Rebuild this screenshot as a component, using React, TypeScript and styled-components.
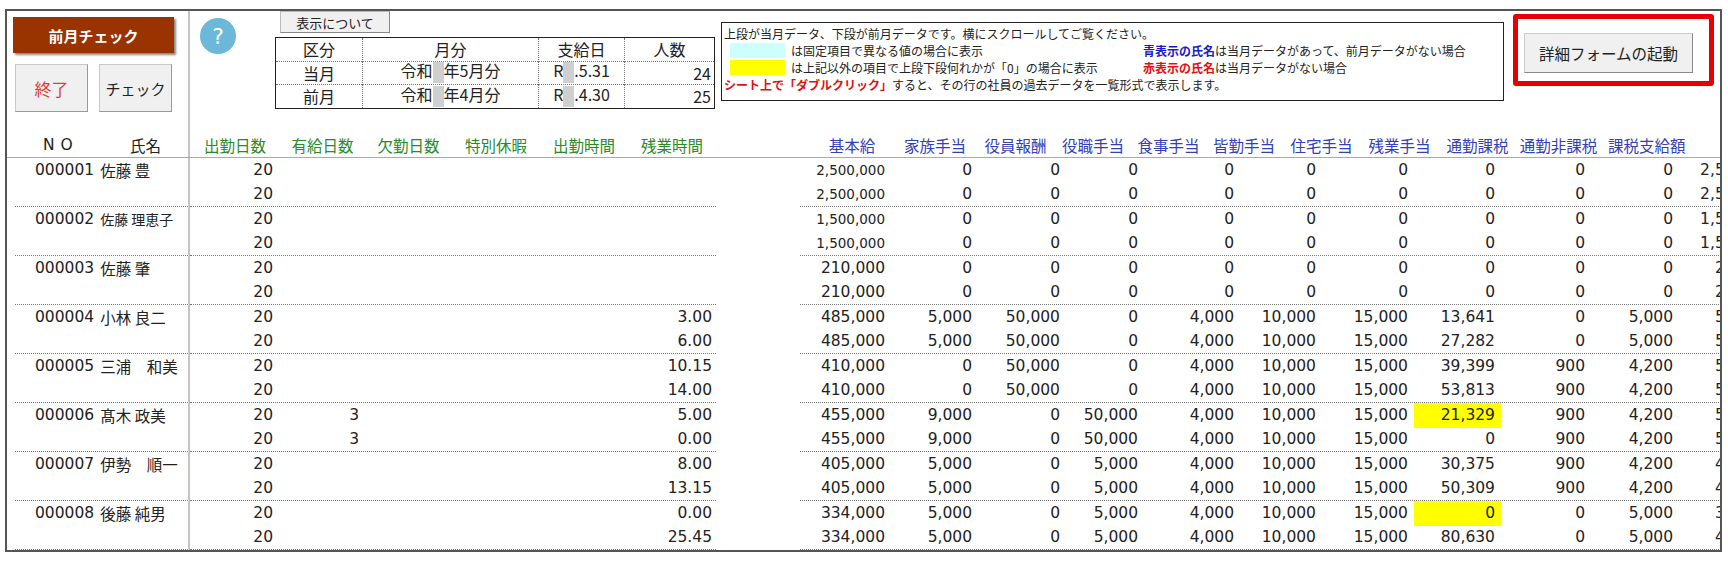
import React from "react";
import styled, { createGlobalStyle } from "styled-components";

const Global = createGlobalStyle`
  body { margin: 0; background: #fff; font-family: "DejaVu Sans", "Noto Sans CJK JP", sans-serif; color: #222; }
  * { box-sizing: border-box; }
`;

const JP = `"Noto Sans CJK JP", "DejaVu Sans", sans-serif`;
const NUM = `"DejaVu Sans", "Noto Sans CJK JP", sans-serif`;

const Frame = styled.div`
  margin: 9px 0 0 5px;
  width: 1717px;
  height: 543px;
  border: 2px solid #555;
  overflow: hidden;
  display: flex;
  flex-direction: column;
`;
const Top = styled.div`
  display: flex;
  height: 121px;
  flex: none;
`;
const LeftTop = styled.div`
  width: 183px;
  flex: none;
  border-right: 2px solid #c4c4c4;
  padding: 6px 0 0 6px;
  display: flex;
  flex-direction: column;
`;
const PrevBtn = styled.div`
  width: 161px;
  height: 36px;
  background: #993300;
  color: #fff;
  font: bold 15px ${JP};
  display: flex;
  align-items: center;
  justify-content: center;
  box-shadow: 2px 2px 2px #888;
`;
const BtnRow = styled.div`
  display: flex;
  gap: 11px;
  margin: 11px 0 0 2px;
`;
const GrayBtn = styled.div<{ $red?: boolean }>`
  width: 73px;
  height: 48px;
  background: #f0f0f0;
  border: 1px solid #c8c8c8;
  border-bottom-color: #999;
  border-right-color: #999;
  color: ${(p) => (p.$red ? "#e03a3a" : "#222")};
  font: ${(p) => (p.$red ? "17px" : "15px")} ${JP};
  display: flex;
  align-items: center;
  justify-content: center;
`;
const RightTop = styled.div`
  display: flex;
  align-items: flex-start;
  flex: none;
`;
const Help = styled.div`
  width: 36px;
  height: 36px;
  border-radius: 50%;
  background: #6cb8d8;
  color: #fff;
  font: 22px "DejaVu Sans", sans-serif;
  display: flex;
  align-items: center;
  justify-content: center;
  margin: 7px 0 0 10px;
  flex: none;
`;
const SummaryCol = styled.div`
  margin-left: 39px;
  display: flex;
  flex-direction: column;
  flex: none;
`;
const SmallBtn = styled.div`
  margin-left: 5px;
  width: 110px;
  height: 22px;
  background: #f0f0f0;
  border: 1px solid #bbb;
  border-right-color: #888;
  border-bottom-color: #888;
  font: 13px ${JP};
  display: flex;
  align-items: center;
  justify-content: center;
`;
const STable = styled.table`
  margin-top: 4px;
  border-collapse: collapse;
  border: 1px solid #222;
  font: 16px ${JP};
  td {
    height: 23.5px;
    padding: 0 3px;
    border-left: 1px dotted #777;
    border-top: 1px dotted #777;
    text-align: center;
    line-height: 1;
  }
  td.r { text-align: right; }
`;
const Blank = styled.span`
  display: inline-block;
  width: 11px;
  height: 21px;
  background: #cfcfcf;
  vertical-align: middle;
`;
const Info = styled.div`
  margin: 11px 0 0 6px;
  width: 783px;
  height: 79px;
  flex: none;
  border: 1px solid #222;
  font: 12px ${JP};
  padding: 2px 0 0 2px;
  line-height: 17px;
`;
const InfoGrid = styled.div`
  display: grid;
  grid-template-columns: 6px 55px 6px 352px 1fr;
  align-items: center;
`;
const Swatch = styled.span<{ $c: string }>`
  grid-column: 2;
  height: 15px;
  background: ${(p) => p.$c};
`;
const InfoText = styled.span`
  grid-column: 4;
`;
const Em = styled.b<{ $c: string }>`
  color: ${(p) => p.$c};
`;
const RedFrame = styled.div`
  margin: 3px 0 0 9px;
  width: 201px;
  height: 72px;
  flex: none;
  border: 5px solid #e80000;
  border-radius: 3px;
  padding: 14px 0 0 6px;
`;
const LaunchBtn = styled.div`
  width: 169px;
  height: 40px;
  background: #f0f0f0;
  border: 1px solid #ccc;
  border-right-color: #888;
  border-bottom-color: #888;
  font: 15.5px ${JP};
  display: flex;
  align-items: center;
  justify-content: center;
`;

const HeadRow = styled.div`
  display: flex;
  height: 26px;
  flex: none;
  border-bottom: 1px solid #aaa;
  font: 15.5px ${JP};
  align-items: stretch;
`;
const NameHead = styled.div`
  width: 183px;
  flex: none;
  border-right: 2px solid #c4c4c4;
  display: flex;
  align-items: center;
  white-space: nowrap;
`;
const HNo = styled.span`
  margin-left: 36px;
  width: 87px;
  letter-spacing: 6px;
  font-family: ${NUM};
`;
const HCell = styled.div<{ $w: number; $c: string; $start?: boolean }>`
  width: ${(p) => p.$w}px;
  flex: none;
  color: ${(p) => p.$c};
  white-space: nowrap;
  display: flex;
  align-items: center;
  justify-content: ${(p) => (p.$start ? "flex-start" : "center")};
  padding-left: ${(p) => (p.$start ? "8px" : "0")};
`;
const Spacer = styled.div<{ $w: number }>`
  width: ${(p) => p.$w}px;
  flex: none;
`;

const Row = styled.div`
  display: flex;
  height: 24.5px;
  flex: none;
  font: 15.5px ${NUM};
`;
const NameCell = styled.div<{ $line: boolean }>`
  width: 175px;
  flex: none;
  margin-left: 8px;
  border-right: 2px solid #c4c4c4;
  border-bottom: ${(p) => (p.$line ? "1px dotted #777" : "none")};
  padding-left: 20px;
  display: flex;
  align-items: center;
  white-space: nowrap;
  overflow: hidden;
  font-family: ${NUM};
`;
const NameJP = styled.span<{ $small?: boolean }>`
  font-family: ${JP};
  font-size: ${(p) => (p.$small ? "14px" : "15.5px")};
  margin-left: 6px;
`;
const Part = styled.div<{ $line: boolean }>`
  display: flex;
  flex: none;
  border-bottom: ${(p) => (p.$line ? "1px dotted #777" : "none")};
`;
const Cell = styled.div<{ $w: number; $pr: number; $hl?: boolean; $small?: boolean }>`
  width: ${(p) => p.$w}px;
  flex: none;
  padding-right: ${(p) => p.$pr}px;
  white-space: nowrap;
  background: ${(p) => (p.$hl ? "#ffff00" : "transparent")};
  font-size: ${(p) => (p.$small ? "13.5px" : "15.5px")};
  display: flex;
  align-items: center;
  justify-content: flex-end;
`;

const leftW = [90, 85, 87, 88, 88, 88];
const leftPr = [7, 6, 6, 6, 6, 4];
const rightW = [91, 87, 88, 78, 96, 82, 92, 87, 90, 88, 100];
const headLeft = ["出勤日数", "有給日数", "欠勤日数", "特別休暇", "出勤時間", "残業時間"];
const headRightW = [84, 82, 79, 76, 75, 76, 79, 77, 79, 83, 180];
const headRight = ["基本給", "家族手当", "役員報酬", "役職手当", "食事手当", "皆勤手当", "住宅手当", "残業手当", "通勤課税", "通勤非課税", "課税支給額"];

type Line = { left: string[]; right: string[]; hl?: number };
type Emp = { no: string; name: string; small?: boolean; lines: [Line, Line] };

const z9 = (b: string, t: string) => [b, "0", "0", "0", "0", "0", "0", "0", "0", "0", t];
const e6 = (a: string, b = "", c = "") => [a, b, "", "", "", c];

const emps: Emp[] = [
  { no: "000001", name: "佐藤 豊", lines: [
    { left: e6("20"), right: z9("2,500,000", "2,500,000") },
    { left: e6("20"), right: z9("2,500,000", "2,500,000") }] },
  { no: "000002", name: "佐藤 理恵子", small: true, lines: [
    { left: e6("20"), right: z9("1,500,000", "1,500,000") },
    { left: e6("20"), right: z9("1,500,000", "1,500,000") }] },
  { no: "000003", name: "佐藤 肇", lines: [
    { left: e6("20"), right: z9("210,000", "210,000") },
    { left: e6("20"), right: z9("210,000", "210,000") }] },
  { no: "000004", name: "小林 良二", lines: [
    { left: e6("20", "", "3.00"), right: ["485,000", "5,000", "50,000", "0", "4,000", "10,000", "15,000", "13,641", "0", "5,000", "582,641"] },
    { left: e6("20", "", "6.00"), right: ["485,000", "5,000", "50,000", "0", "4,000", "10,000", "15,000", "27,282", "0", "5,000", "596,282"] }] },
  { no: "000005", name: "三浦　和美", lines: [
    { left: e6("20", "", "10.15"), right: ["410,000", "0", "50,000", "0", "4,000", "10,000", "15,000", "39,399", "900", "4,200", "529,299"] },
    { left: e6("20", "", "14.00"), right: ["410,000", "0", "50,000", "0", "4,000", "10,000", "15,000", "53,813", "900", "4,200", "543,713"] }] },
  { no: "000006", name: "髙木 政美", lines: [
    { left: e6("20", "3", "5.00"), right: ["455,000", "9,000", "0", "50,000", "4,000", "10,000", "15,000", "21,329", "900", "4,200", "565,229"], hl: 7 },
    { left: e6("20", "3", "0.00"), right: ["455,000", "9,000", "0", "50,000", "4,000", "10,000", "15,000", "0", "900", "4,200", "543,900"] }] },
  { no: "000007", name: "伊勢　順一", lines: [
    { left: e6("20", "", "8.00"), right: ["405,000", "5,000", "0", "5,000", "4,000", "10,000", "15,000", "30,375", "900", "4,200", "475,275"] },
    { left: e6("20", "", "13.15"), right: ["405,000", "5,000", "0", "5,000", "4,000", "10,000", "15,000", "50,309", "900", "4,200", "495,209"] }] },
  { no: "000008", name: "後藤 純男", lines: [
    { left: e6("20", "", "0.00"), right: ["334,000", "5,000", "0", "5,000", "4,000", "10,000", "15,000", "0", "0", "5,000", "373,000"], hl: 7 },
    { left: e6("20", "", "25.45"), right: ["334,000", "5,000", "0", "5,000", "4,000", "10,000", "15,000", "80,630", "0", "5,000", "453,630"] }] },
];

function DataRow({ emp, idx }: { emp: Emp; idx: number }) {
  const l = emp.lines[idx];
  const line = idx === 1;
  return (
    <Row>
      <NameCell $line={line}>
        {idx === 0 && (
          <>
            {emp.no}
            <NameJP $small={emp.small}>{emp.name}</NameJP>
          </>
        )}
      </NameCell>
      <Part $line={line}>
        {l.left.map((v, i) => (
          <Cell key={i} $w={leftW[i]} $pr={leftPr[i]}>{v}</Cell>
        ))}
      </Part>
      <Spacer $w={84} />
      <Part $line={line}>
        {l.right.map((v, i) => (
          <Cell key={i} $w={rightW[i]} $pr={i === 10 ? 0 : 6} $hl={l.hl === i} $small={i === 0 && v.length > 7}>
            {v}
          </Cell>
        ))}
      </Part>
    </Row>
  );
}

export default function App() {
  return (
    <>
      <Global />
      <Frame>
        <Top>
          <LeftTop>
            <PrevBtn>前月チェック</PrevBtn>
            <BtnRow>
              <GrayBtn $red>終了</GrayBtn>
              <GrayBtn>チェック</GrayBtn>
            </BtnRow>
          </LeftTop>
          <RightTop>
            <Help>?</Help>
            <SummaryCol>
              <SmallBtn>表示について</SmallBtn>
              <STable>
                <colgroup>
                  <col style={{ width: 87 }} />
                  <col style={{ width: 176 }} />
                  <col style={{ width: 86 }} />
                  <col style={{ width: 90 }} />
                </colgroup>
                <tbody>
                  <tr><td>区分</td><td>月分</td><td>支給日</td><td>人数</td></tr>
                  <tr><td>当月</td><td>令和<Blank />年5月分</td><td>R<Blank />.5.31</td><td className="r">24</td></tr>
                  <tr><td>前月</td><td>令和<Blank />年4月分</td><td>R<Blank />.4.30</td><td className="r">25</td></tr>
                </tbody>
              </STable>
            </SummaryCol>
            <Info>
              <div>上段が当月データ、下段が前月データです。横にスクロールしてご覧ください。</div>
              <InfoGrid>
                <Swatch $c="#ccffff" />
                <InfoText>は固定項目で異なる値の場合に表示</InfoText>
                <span><Em $c="#1a1acc">青表示の氏名</Em>は当月データがあって、前月データがない場合</span>
                <Swatch $c="#ffff00" />
                <InfoText>は上記以外の項目で上段下段何れかが「0」の場合に表示</InfoText>
                <span><Em $c="#e01010">赤表示の氏名</Em>は当月データがない場合</span>
              </InfoGrid>
              <div><Em $c="#e01010">シート上で「ダブルクリック」</Em>すると、その行の社員の過去データを一覧形式で表示します。</div>
            </Info>
            <RedFrame>
              <LaunchBtn>詳細フォームの起動</LaunchBtn>
            </RedFrame>
          </RightTop>
        </Top>
        <HeadRow>
          <NameHead>
            <HNo>NO</HNo>
            <span>氏名</span>
          </NameHead>
          {headLeft.map((h, i) => (
            <HCell key={h} $w={leftW[i]} $c="#2a8a2a">{h}</HCell>
          ))}
          <Spacer $w={94} />
          {headRight.map((h, i) => (
            <HCell key={h} $w={headRightW[i]} $c="#3340b8" $start={i === 10}>{h}</HCell>
          ))}
        </HeadRow>
        {emps.map((e) => (
          <React.Fragment key={e.no}>
            <DataRow emp={e} idx={0} />
            <DataRow emp={e} idx={1} />
          </React.Fragment>
        ))}
      </Frame>
    </>
  );
}
